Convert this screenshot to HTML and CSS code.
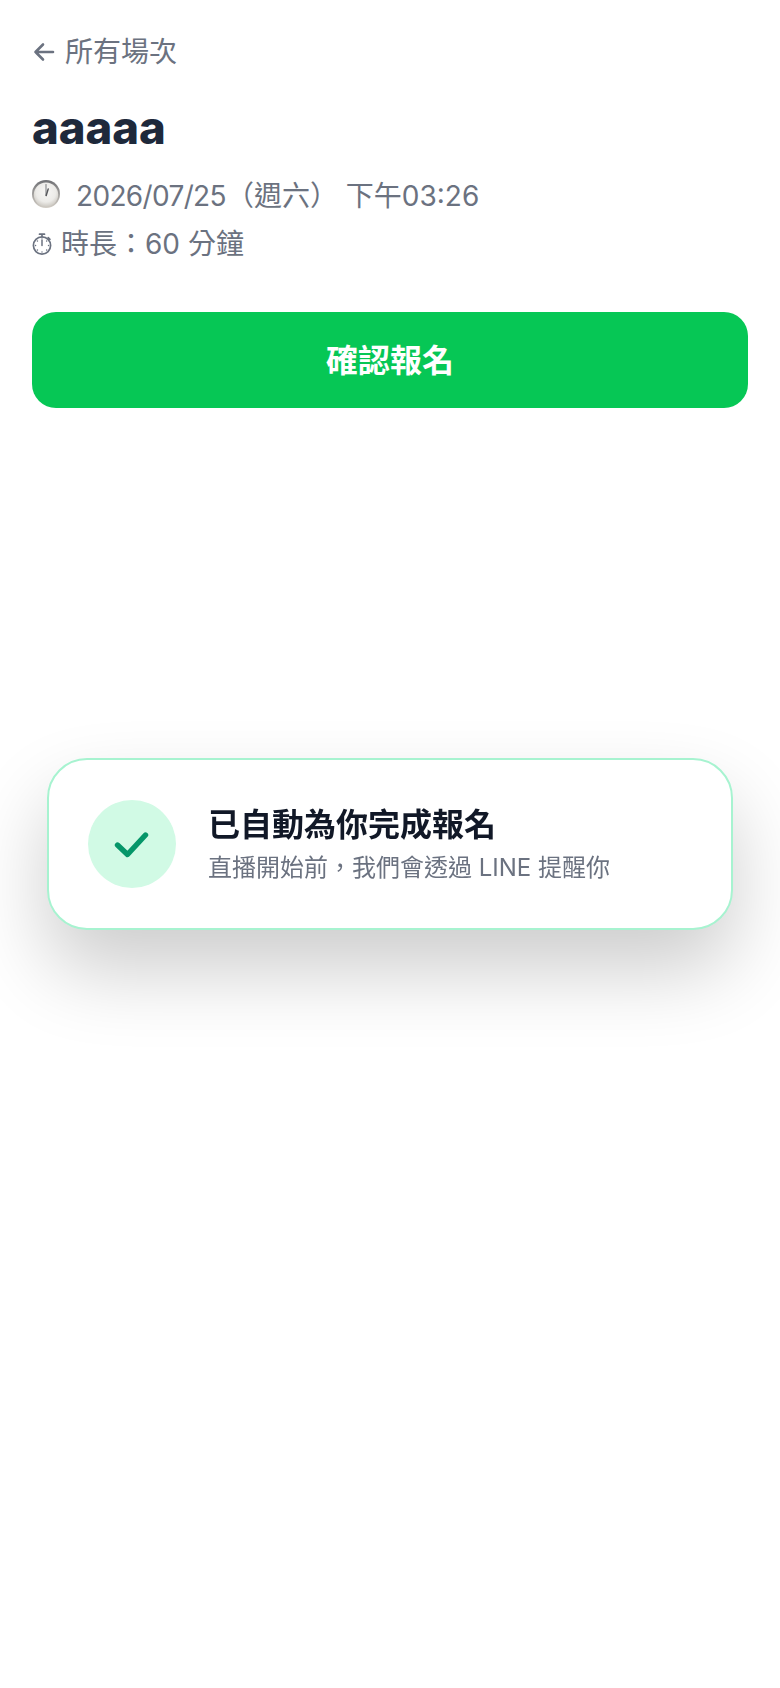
FILE: index.html
```html
<!DOCTYPE html>
<html lang="zh-Hant">
<head>
    <meta charset="UTF-8">
    <meta name="viewport" content="width=device-width, initial-scale=1.0">
    <title>確認報名</title>
    <link rel="stylesheet" href="styles.css">
</head>
<body>
    <div class="container">
        <a class="back-link" href="#">
            <svg class="back-icon" viewBox="0 0 24 24" fill="none" stroke="currentColor" stroke-width="2.6" stroke-linecap="round" stroke-linejoin="round">
                <path d="M21 12H3.5M11 4.5L3.5 12l7.5 7.5"/>
            </svg>
            <span>所有場次</span>
        </a>

        <h1 class="session-title">aaaaa</h1>

        <div class="meta-row meta-date">
            <svg class="clock-emoji" viewBox="0 0 28 28">
                <defs>
                    <radialGradient id="clockFace" cx="50%" cy="40%" r="62%">
                        <stop offset="0%" stop-color="#f8f7f5"/>
                        <stop offset="65%" stop-color="#ecebe8"/>
                        <stop offset="100%" stop-color="#c9c5be"/>
                    </radialGradient>
                    <linearGradient id="clockRim" x1="0" y1="0" x2="0" y2="1">
                        <stop offset="0%" stop-color="#6f7074"/>
                        <stop offset="100%" stop-color="#d2cdc5"/>
                    </linearGradient>
                </defs>
                <circle cx="14" cy="14" r="14" fill="url(#clockRim)"/>
                <circle cx="14" cy="14.6" r="12.2" fill="url(#clockFace)"/>
                <path d="M14 15.5V4.5" stroke="#77787c" stroke-width="1" stroke-linecap="round"/>
                <path d="M14.2 15.5l2-6.5" stroke="#55565a" stroke-width="1.4" stroke-linecap="round"/>
            </svg>
            <span><span class="date-num">2026/07/25</span>（週六） 下午03:26</span>
        </div>

        <div class="meta-row meta-duration">
            <svg class="timer-icon" viewBox="0 0 20 22" fill="none" stroke="currentColor">
                <circle cx="10" cy="12.5" r="8.6" stroke-width="1.7"/>
                <path d="M7.5 1.2h5M10 1.2v2.6M16.2 4.6l1.7 1.7" stroke-width="1.7" stroke-linecap="round"/>
                <path d="M10 12.5V7.5" stroke-width="1.5" stroke-linecap="round"/>
                <path d="M10 6v.1M10 19v.1M3.5 12.5h.1M16.5 12.5h.1M5.4 7.9l.1.1M14.6 17l.1.1M5.4 17.1l.1-.1M14.6 8l.1-.1" stroke-width="1.4" stroke-linecap="round"/>
            </svg>
            <span>時長：60 分鐘</span>
        </div>

        <button class="confirm-button">確認報名</button>
    </div>

    <!-- 自動報名提示 -->
    <div class="toast">
        <div class="toast-icon">
            <svg viewBox="0 0 36 28" fill="none" stroke="#059669" stroke-width="5.4" stroke-linecap="round" stroke-linejoin="round">
                <path d="M3.5 15l10 9.5L31.5 5"/>
            </svg>
        </div>
        <div class="toast-text">
            <div class="toast-title">已自動為你完成報名</div>
            <div class="toast-sub">直播開始前，我們會透過 LINE 提醒你</div>
        </div>
    </div>
</body>
</html>
```

FILE: styles.css
```css
* {
    margin: 0;
    padding: 0;
    box-sizing: border-box;
}

body {
    font-family: Inter, "Noto Sans CJK TC", sans-serif;
    background-color: #fff;
    color: #6b7280;
}

.container {
    padding: 32px;
}

.back-link {
    display: flex;
    align-items: center;
    gap: 9px;
    height: 40px;
    font-size: 28px;
    line-height: 40px;
    color: #6b7280;
    text-decoration: none;
}

.back-icon {
    width: 24px;
    height: 24px;
    flex-shrink: 0;
}

.session-title {
    margin-top: 24px;
    font-size: 45.5px;
    line-height: 64px;
    font-weight: 800;
    color: #1e293b;
}

.meta-row {
    display: flex;
    align-items: center;
    font-size: 28px;
    line-height: 48px;
    color: #6b7280;
}

.meta-date {
    margin-top: 12px;
    gap: 16px;
}

.date-num {
    letter-spacing: -0.65px;
}

.clock-emoji {
    width: 28px;
    height: 28px;
    flex-shrink: 0;
    margin-top: -4px;
}

.timer-icon {
    width: 20px;
    height: 22px;
    flex-shrink: 0;
}

.meta-duration {
    gap: 9px;
}

.confirm-button {
    display: block;
    width: 100%;
    height: 96px;
    margin-top: 44px;
    padding-bottom: 4px;
    background: #06c755;
    color: #fff;
    border: none;
    border-radius: 24px;
    font-family: inherit;
    font-size: 32px;
    font-weight: 700;
}

/* 提示卡片 */
.toast {
    position: fixed;
    top: 758px;
    left: 47px;
    width: 686px;
    height: 172px;
    display: flex;
    align-items: center;
    gap: 32px;
    padding: 0 39px;
    background: #fff;
    border: 2px solid #a7f3d0;
    border-radius: 40px;
    box-shadow: 0 40px 80px rgba(0, 0, 0, 0.2);
}

.toast-icon {
    width: 88px;
    height: 88px;
    border-radius: 50%;
    background: #d1fae5;
    display: flex;
    align-items: center;
    justify-content: center;
    flex-shrink: 0;
}

.toast-icon svg {
    width: 36px;
    height: 28px;
}

.toast-title {
    font-size: 32px;
    line-height: 44px;
    font-weight: 700;
    color: #111827;
}

.toast-sub {
    font-size: 24px;
    line-height: 34px;
    margin-top: 4px;
    color: #6b7280;
}
```
